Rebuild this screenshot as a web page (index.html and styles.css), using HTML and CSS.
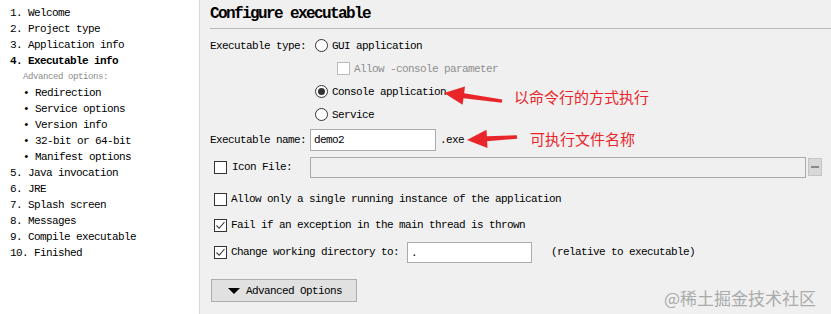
FILE: index.html
```html
<!DOCTYPE html>
<html>
<head>
<meta charset="utf-8">
<link rel="stylesheet" href="styles.css">
</head>
<body>
<div class="app">
  <nav class="sidebar">
    <div class="step">1. Welcome</div>
    <div class="step">2. Project type</div>
    <div class="step">3. Application info</div>
    <div class="step current">4. Executable info</div>
    <div class="sub-head">Advanced options:</div>
    <div class="sub">• Redirection</div>
    <div class="sub">• Service options</div>
    <div class="sub">• Version info</div>
    <div class="sub">• 32-bit or 64-bit</div>
    <div class="sub">• Manifest options</div>
    <div class="step">5. Java invocation</div>
    <div class="step">6. JRE</div>
    <div class="step">7. Splash screen</div>
    <div class="step">8. Messages</div>
    <div class="step">9. Compile executable</div>
    <div class="step">10. Finished</div>
  </nav>
  <main class="main">
    <h1 class="title">Configure executable</h1>
    <div class="form">
      <div class="row r-type">
        <span class="lbl lbl-type">Executable type:</span>
        <span class="radio"></span><span class="txt">GUI application</span>
      </div>
      <div class="row r-indent2">
        <span class="check disabled"></span><span class="txt muted">Allow -console parameter</span>
      </div>
      <div class="row r-indent">
        <span class="radio on"></span><span class="txt">Console application</span>
      </div>
      <div class="row r-indent">
        <span class="radio"></span><span class="txt">Service</span>
      </div>
      <div class="row r-name">
        <span class="lbl lbl-name">Executable name:</span>
        <span class="input name-input">demo2</span>
        <span class="ext">.exe</span>
      </div>
      <div class="row r-icon">
        <span class="check"></span><span class="txt icon-lbl">Icon File:</span>
        <span class="input icon-input disabled-input"></span>
        <span class="browse"><span class="dots"></span></span>
      </div>
      <div class="row r-single">
        <span class="check"></span><span class="txt">Allow only a single running instance of the application</span>
      </div>
      <div class="row r-fail">
        <span class="check"><svg viewBox="0 0 13 13" width="13" height="13"><polyline points="2.5,6.5 5.2,9.3 10.5,3" fill="none" stroke="#333" stroke-width="1.1"/></svg></span><span class="txt">Fail if an exception in the main thread is thrown</span>
      </div>
      <div class="row r-dir">
        <span class="check"><svg viewBox="0 0 13 13" width="13" height="13"><polyline points="2.5,6.5 5.2,9.3 10.5,3" fill="none" stroke="#333" stroke-width="1.1"/></svg></span><span class="txt dir-lbl">Change working directory to:</span>
        <span class="input dir-input">.</span>
        <span class="txt rel">(relative to executable)</span>
      </div>
      <div class="row r-btn">
        <button class="adv-btn"><span class="tri"></span>Advanced Options</button>
      </div>
    </div>
  </main>
</div>
<svg class="annot" width="831" height="314" viewBox="0 0 831 314">
  <polygon points="444,93 465,86.5 464.1,93.2 502.2,99.5 501.8,102.7 463.5,98.2 462.6,104.8" fill="#e8262a"/>
  <polygon points="467,140 486.5,129.8 486.85,136.3 516.9,135.3 517.1,138.7 487.15,141.3 487.5,148" fill="#e8262a"/>
</svg>
<div class="note note1">以命令行的方式执行</div>
<div class="note note2">可执行文件名称</div>
<div class="watermark">@稀土掘金技术社区</div>
</body>
</html>
```
FILE: styles.css
```css
html, body {
  margin: 0;
  padding: 0;
}
body {
  width: 831px;
  height: 314px;
  overflow: hidden;
  position: relative;
  font-family: "Liberation Mono", "DejaVu Sans Mono", monospace;
  font-size: 11px;
  letter-spacing: -0.6px;
  color: #000;
  background: #f0f0f0;
}
.app {
  display: flex;
  height: 314px;
}
.sidebar {
  width: 200px;
  box-sizing: border-box;
  background: #fff;
  border-right: 1px solid #dadada;
  padding: 5px 0 0 10px;
  flex: none;
}
.step, .sub, .sub-head {
  height: 16px;
  line-height: 16px;
  white-space: pre;
}
.current {
  font-weight: bold;
}
.sub-head {
  padding-left: 13px;
  font-size: 9px;
  letter-spacing: -0.4px;
  color: #8a8a8a;
}
.sub {
  padding-left: 13px;
}
.main {
  flex: 1;
  min-width: 0;
}
.title {
  margin: 0 0 0 10px;
  height: 28px;
  line-height: 29px;
  font-size: 16px;
  letter-spacing: -1.6px;
  font-weight: bold;
  border-bottom: 1px solid #b9b9b9;
}
.form {
  padding-left: 10px;
  display: flex;
  flex-direction: column;
}
.row {
  display: flex;
  align-items: center;
  white-space: pre;
}
.r-type { height: 23px; margin-top: 5px; }
.r-indent { height: 23px; padding-left: 105px; }
.r-indent2 { height: 23px; padding-left: 127px; }
.r-name { height: 24px; margin-top: 2px; }
.r-icon { height: 22px; margin-top: 4px; padding-left: 4px; }
.r-single { height: 22px; margin-top: 10px; padding-left: 4px; }
.r-fail { height: 22px; margin-top: 4px; padding-left: 4px; }
.r-dir { height: 22px; margin-top: 5px; padding-left: 4px; }
.r-btn { height: 23px; margin-top: 16px; padding-left: 1px; }

.lbl-type { width: 105px; }
.lbl-name { width: 100px; }
.txt { margin-left: 4px; }
.muted { color: #8f8f8f; }
.radio {
  width: 13px;
  height: 13px;
  box-sizing: border-box;
  border: 1px solid #333;
  border-radius: 50%;
  background: #fff;
  display: flex;
  align-items: center;
  justify-content: center;
  flex: none;
}
.radio.on::after {
  content: "";
  width: 7px;
  height: 7px;
  border-radius: 50%;
  background: #333;
}
.check {
  width: 13px;
  height: 13px;
  box-sizing: border-box;
  border: 1px solid #333;
  background: #fff;
  flex: none;
  display: flex;
  align-items: center;
  justify-content: center;
}
.check svg {
  flex: none;
}
.check.disabled {
  border-color: #bcbcbc;
}
.input {
  box-sizing: border-box;
  border: 1px solid #ababab;
  background: #fff;
  height: 22px;
  line-height: 20px;
  padding-left: 3px;
}
.name-input { width: 126px; }
.ext { margin-left: 4px; }
.icon-lbl { width: 78px; margin-left: 5px; }
.icon-input { width: 496px; height: 21px; }
.disabled-input { background: #f0f0f0; }
.browse {
  margin-left: 2px;
  width: 14px;
  height: 18px;
  box-sizing: border-box;
  border: 1px solid #c4c4c4;
  background: #d8d8d8;
  display: flex;
  align-items: center;
  justify-content: center;
}
.dots {
  width: 8px;
  height: 2px;
  background: #8a8a8a;
}
.dir-lbl { width: 176px; }
.dir-input { width: 125px; height: 21px; }
.rel { margin-left: 19px; }
.adv-btn {
  width: 146px;
  height: 23px;
  box-sizing: border-box;
  border: 1px solid #adadad;
  background: #e1e1e1;
  font: inherit;
  letter-spacing: inherit;
  color: #000;
  display: flex;
  align-items: center;
  padding: 0 0 0 16px;
  margin: 0;
}
.tri {
  width: 0;
  height: 0;
  border-left: 6px solid transparent;
  border-right: 6px solid transparent;
  border-top: 6px solid #000;
  margin-right: 6px;
}
.annot {
  position: absolute;
  left: 0;
  top: 0;
  pointer-events: none;
}
.note {
  position: absolute;
  font-family: "Noto Sans CJK SC", sans-serif;
  font-size: 15px;
  letter-spacing: 0;
  color: #e8262a;
  line-height: 20px;
  white-space: nowrap;
}
.note1 { left: 514px; top: 87px; }
.note2 { left: 530px; top: 129px; }
.watermark {
  position: absolute;
  left: 664px;
  top: 287px;
  font-family: "Noto Sans CJK SC", sans-serif;
  font-size: 17px;
  letter-spacing: 0;
  line-height: 22px;
  color: #ababab;
  white-space: nowrap;
}
```
